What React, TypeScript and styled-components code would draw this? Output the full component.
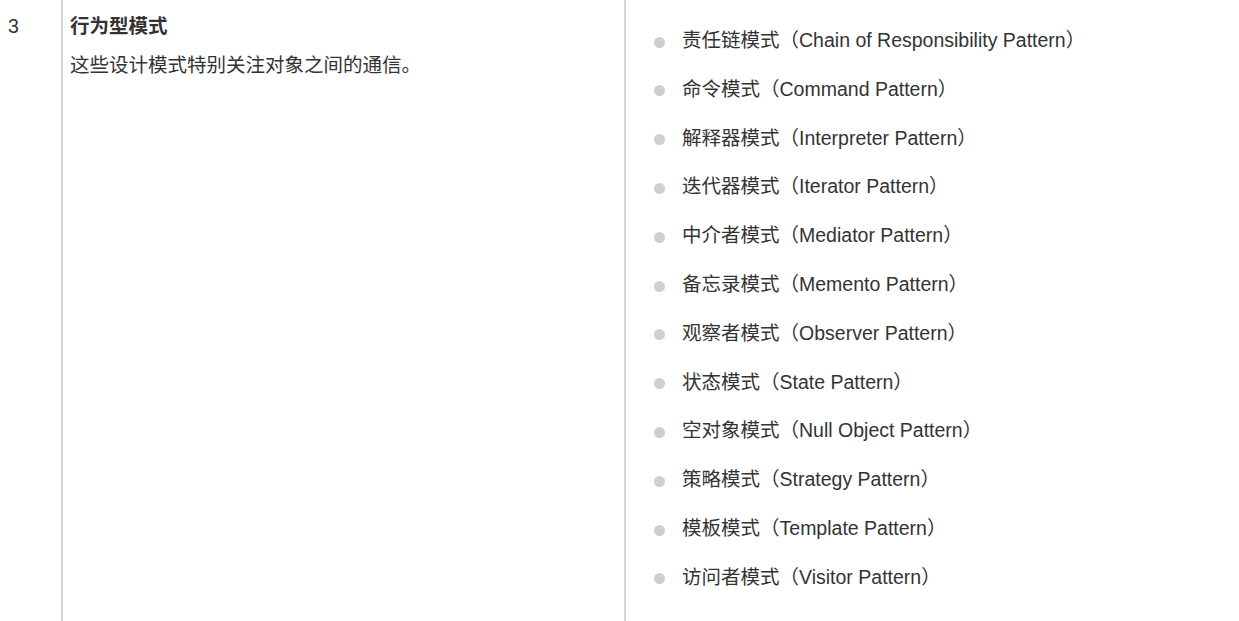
import React from "react";
import styled, { createGlobalStyle } from "styled-components";

const Global = createGlobalStyle`
  html, body { margin: 0; padding: 0; background: #fff; }
  body {
    font-family: "Liberation Sans", Arial, "Noto Sans CJK SC", sans-serif;
    font-size: 19.5px;
    line-height: 1.5;
    color: #333;
    overflow: hidden;
  }
`;

const Row = styled.div`
  display: grid;
  grid-template-columns: 61px 563px 1fr;
  height: 621px;
  overflow: hidden;
`;

const Cell = styled.div<{ $divider?: boolean; $padTop?: number }>`
  padding: ${(p) => p.$padTop ?? 12}px 8px 0 ${(p) => (p.$divider ? 7 : 8)}px;
  border-left: ${(p) => (p.$divider ? "2px solid #d5d5d5" : "none")};
`;

const Title = styled.div`
  font-weight: bold;
`;

const Desc = styled.p`
  margin: 10px 0 0;
`;

const List = styled.ul`
  list-style: none;
  margin: 0;
  padding: 0 0 0 49px;
`;

const Item = styled.li`
  position: relative;
  margin-bottom: 19.55px;
  &::before {
    content: "";
    position: absolute;
    left: -28px;
    top: 50%;
    width: 11px;
    height: 11px;
    margin-top: -4px;
    border-radius: 50%;
    background: #cfcfcf;
  }
`;

const patterns = [
  ["责任链模式", "Chain of Responsibility Pattern"],
  ["命令模式", "Command Pattern"],
  ["解释器模式", "Interpreter Pattern"],
  ["迭代器模式", "Iterator Pattern"],
  ["中介者模式", "Mediator Pattern"],
  ["备忘录模式", "Memento Pattern"],
  ["观察者模式", "Observer Pattern"],
  ["状态模式", "State Pattern"],
  ["空对象模式", "Null Object Pattern"],
  ["策略模式", "Strategy Pattern"],
  ["模板模式", "Template Pattern"],
  ["访问者模式", "Visitor Pattern"],
];

export default function App() {
  return (
    <>
      <Global />
      <Row>
        <Cell>3</Cell>
        <Cell $divider>
          <Title>行为型模式</Title>
          <Desc>这些设计模式特别关注对象之间的通信。</Desc>
        </Cell>
        <Cell $divider $padTop={26}>
          <List>
            {patterns.map(([cn, en]) => (
              <Item key={en}>
                {cn}（{en}）
              </Item>
            ))}
          </List>
        </Cell>
      </Row>
    </>
  );
}
